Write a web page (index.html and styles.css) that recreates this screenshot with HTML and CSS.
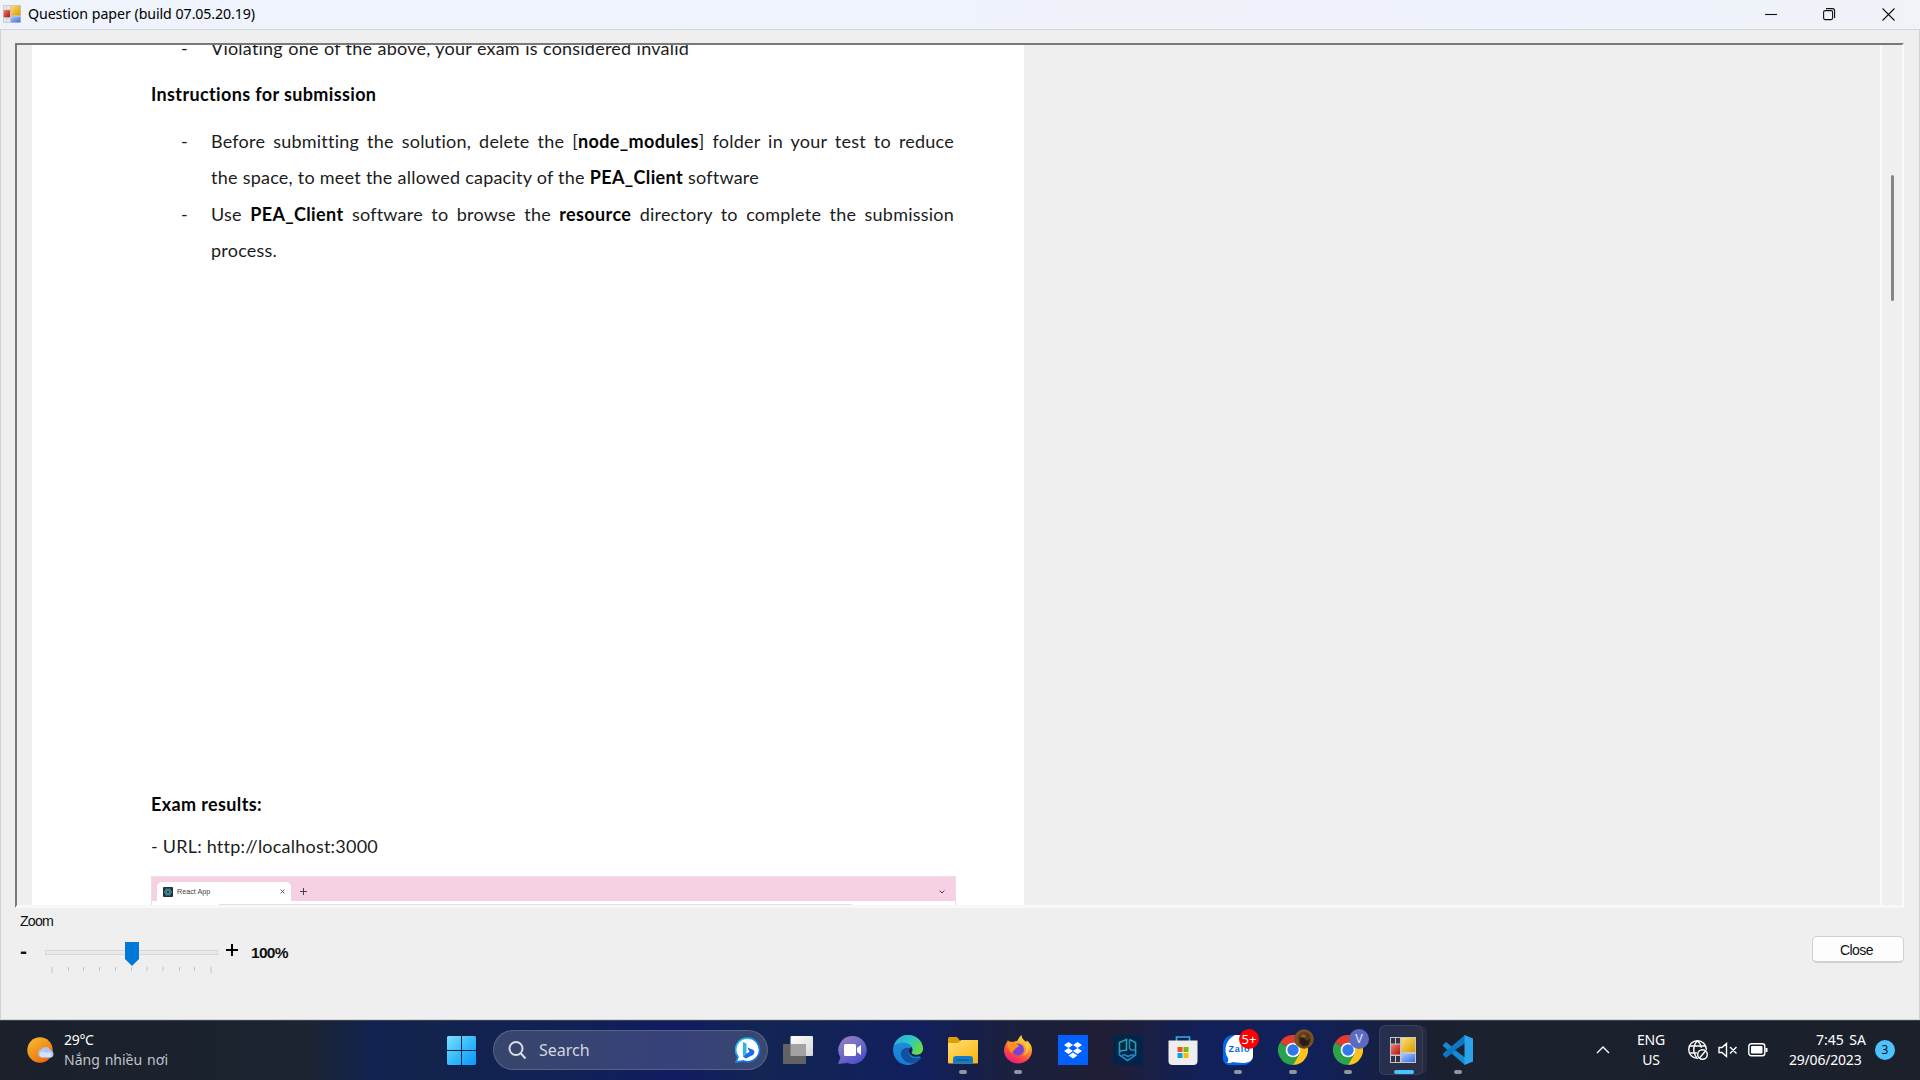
FILE: index.html
```html
<!DOCTYPE html>
<html lang="en">
<head>
<meta charset="utf-8">
<title>Question paper (build 07.05.20.19)</title>
<link rel="stylesheet" href="styles.css">
</head>
<body>
<header class="titlebar">
  <svg class="app-icon" viewBox="0 0 26 26"><use href="#forms"/></svg>
  <h1 class="fit title">Question paper (build 07.05.20.19)</h1>
  <div class="controls">
    <svg viewBox="0 0 13 13"><path d="M0 6.500h12"/></svg>
    <svg viewBox="0 0 13 13"><rect x=".6" y="2.600" width="9" height="9" rx="1.500"/><path d="M3 .6h6.500a2.100 2.100 0 0 1 2.100 2.100V10"/></svg>
    <svg viewBox="0 0 13 13"><path d="M.5.5l12 12M12.500.5l-12 12"/></svg>
  </div>
</header>

<main class="window">
  <section class="viewer">
    <article class="paper">
      <div class="item first"><span class="dash">-</span><p class="fit violating">Violating one of the above, your exam is considered invalid</p></div>
      <h2 class="fit instructions">Instructions for submission</h2>
      <div class="item"><span class="dash">-</span>
        <div><p class="fit full">Before submitting the solution, delete the [<b>node_modules</b>] folder in your test to reduce</p>
        <p class="fit space-line">the space, to meet the allowed capacity of the <b>PEA_Client</b> software</p></div>
      </div>
      <div class="item"><span class="dash">-</span>
        <div><p class="fit full">Use <b>PEA_Client</b> software to browse the <b>resource</b> directory to complete the submission</p>
        <p>process.</p></div>
      </div>
      <h2 class="fit results">Exam results:</h2>
      <p class="fit url">- URL: http://localhost:3000</p>
      <div class="browser">
        <div class="tabs">
          <div class="tab">
            <svg class="react" viewBox="0 0 10 10"><rect width="10" height="10" rx="1" fill="#23303a"/><g fill="none" stroke="#469cae" stroke-width=".8"><ellipse cx="5" cy="5" rx="3.800" ry="1.500"/><ellipse cx="5" cy="5" rx="3.800" ry="1.500" transform="rotate(60 5 5)"/><ellipse cx="5" cy="5" rx="3.800" ry="1.500" transform="rotate(120 5 5)"/></g></svg>
            <span class="tab-name">React App</span>
            <svg class="tab-x" viewBox="0 0 6 6"><path d="M.7.7l4.600 4.600M5.300.7L.7 5.300"/></svg>
          </div>
          <svg class="plus" viewBox="0 0 7 7"><path d="M3.500 0v7M0 3.500h7"/></svg>
          <svg class="chev" viewBox="0 0 6 4"><path d="M.6.6L3 3 5.400.6"/></svg>
        </div>
        <div class="address"></div>
      </div>
    </article>
    <div class="scroll"><div class="thumb"></div></div>
  </section>

  <footer class="bottom">
    <div class="zoom">
      <div class="zoom-label">Zoom</div>
      <div class="zoom-row">
        <b class="minus">-</b>
        <svg class="slider" viewBox="0 0 174 32">
          <rect x=".5" y="8.500" width="172" height="4" fill="#e7eaea" stroke="#d6d6d6"/>
          <path d="M7 25v6M166 25v6M23.500 25v4M38.500 25v4M54.500 25v4M70.500 25v4M86.500 25v4M102 25v4M118 25v4M134.500 25v4M149.500 25v4" stroke="#c3c3c3"/>
          <path d="M80 0h14v17l-7 7-7-7z" fill="#0078d7"/>
        </svg>
        <svg class="zoom-plus" viewBox="0 0 12 12"><path d="M6 0v12M0 6h12"/></svg>
        <b class="percent">100%</b>
      </div>
    </div>
    <button class="close">Close</button>
  </footer>
</main>

<nav class="taskbar">
  <div class="weather">
    <svg viewBox="0 0 28 26"><defs><linearGradient id="sun" x1="0" y1="0" x2=".7" y2="1"><stop stop-color="#f4c22d"/><stop offset="1" stop-color="#ee6a12"/></linearGradient></defs><circle cx="13" cy="13" r="12.700" fill="url(#sun)"/><path d="M14.500 20.800a4.500 4.500 0 0 1-.3-8.600 5.500 5.500 0 0 1 9.300 1 4 4 0 0 1 .5 7.600z" fill="#a9c7f5"/><path d="M14 20a3 3 0 0 1 1-5.400c2-.6 3 1 4.500 1 1 0 2-.7 3.500 0 2 .9 2 3.700.5 4.400z" fill="#d4e3fb"/></svg>
    <div class="weather-text"><div class="temp">29°C</div><div class="fit sky">Nắng nhiều nơi</div></div>
  </div>

  <div class="center">
    <svg class="start" viewBox="0 0 29 29"><defs><linearGradient id="win" gradientUnits="userSpaceOnUse" x1="0" y1="0" x2="29" y2="29"><stop stop-color="#7fe0fd"/><stop offset=".5" stop-color="#35bcfb"/><stop offset="1" stop-color="#0a96fb"/></linearGradient></defs><path d="M1 0h13v14H0V1zM15 0h13l1 1v13H15zM0 15h14v14H1l-1-1zM15 15h14v13l-1 1H15z" fill="url(#win)"/></svg>
    <div class="search">
      <svg class="lens" viewBox="0 0 19 19"><circle cx="8" cy="7.500" r="6.500"/><path d="M12.500 12l5 5.500"/></svg>
      <span>Search</span>
      <svg class="bing" viewBox="0 0 26 26"><defs><linearGradient id="bing" x2="1" y2="1"><stop stop-color="#29dce9"/><stop offset=".5" stop-color="#1684ec"/><stop offset="1" stop-color="#1760dc"/></linearGradient></defs><path d="M13 1.200A11.800 11.800 0 1 1 8.500 24L1 25.200 3 20A11.800 11.800 0 0 1 13 1.200z" fill="#fff" stroke="url(#bing)" stroke-width="1.700"/><path d="M8 5l3.500 1.500v10L8 19.500z" fill="#28b9e9"/><path d="M11.500 16.500l3-1.500-2-4.500 6 2.500c1.500 1.200 1 4-.7 5L11 21.500l-3-2z" fill="#176ae5"/></svg>
    </div>

    <div class="apps">
      <div class="app"><svg viewBox="0 0 30 30"><defs><linearGradient id="tv" x2="1" y2="1"><stop stop-color="#fff"/><stop offset="1" stop-color="#d6d6d8"/></linearGradient></defs><rect x="7.500" y="1" width="22.500" height="20" rx="1" fill="url(#tv)"/><rect x="0" y="9" width="23" height="20" rx="1" fill="#626262"/><path d="M7.500 9H23v12H7.500z" fill="#a3a3a3"/></svg></div>
      <div class="app"><svg viewBox="0 0 30 30"><defs><linearGradient id="chat" x1="0" y1="0" x2=".7" y2="1"><stop stop-color="#a77fba"/><stop offset=".4" stop-color="#7c72c4"/><stop offset="1" stop-color="#4a50c8"/></linearGradient></defs><path d="M14.500 1a14 14 0 1 1-5 27L0 29l2.500-6.500A14 14 0 0 1 14.500 1z" fill="url(#chat)"/><rect x="6" y="9" width="12" height="12" rx="1.500" fill="#fff"/><path d="M19 13l4-3v10l-4-3z" fill="#fff"/></svg></div>
      <div class="app"><svg viewBox="0 0 30 30"><defs><linearGradient id="eg" x2="1" y2=".5"><stop stop-color="#2ba9e8"/><stop offset=".55" stop-color="#2dc7c6"/><stop offset="1" stop-color="#65db49"/></linearGradient><linearGradient id="eb" y2="1" x2="0"><stop stop-color="#2290d8"/><stop offset="1" stop-color="#137ed5"/></linearGradient></defs><path d="M0 15a15 15 0 0 1 30 0l-4 6 2 1.500A15 15 0 0 1 0 15z" fill="url(#eb)"/><path d="M8 18c0 7 7 11 12.500 10.500 3-.8 6-3 7.500-6-4 1-9 1-11.500-2-1.700-2.300-1-5 .5-7-4-2-9 1-9 4.500z" fill="#13509d"/><path d="M1 10C4 3 9.500 0 15 0c9 0 15 6.500 15 13.500 0 4-3 6.500-6.500 6.500-3 0-5-1-5-2 0-1 1-1.500 1-3.500 0-4-4.500-7-9-7-4 0-7.500 1.500-9.500 2.500z" fill="url(#eg)"/><path d="M18.500 12c-3 1-4 6 0 8.500 2.500 1.500 6 1.700 9.500 0l1.500-2.500c-4 2.500-9 2.300-11 0 0-1 1-1.500 1-3.500z" fill="#141f57"/></svg></div>
      <div class="app run"><svg viewBox="0 0 30 30"><defs><linearGradient id="fo" x2=".8" y2="1"><stop stop-color="#ffdf73"/><stop offset="1" stop-color="#fcb713"/></linearGradient></defs><path d="M0 3.500Q0 2 1.500 2H9l3 3.500V14H0z" fill="#df9d06"/><path d="M0 8h10l3-3h17v22.500q0 1-1 1H1q-1 0-1-1z" fill="url(#fo)"/><path d="M5 28.500V24q0-3 3-3h14q3 0 3 3v4.500z" fill="#127cc9"/><path d="M8.500 25h13" stroke="#0a4c89"/></svg></div>
      <div class="app run"><svg viewBox="0 0 30 30"><defs><linearGradient id="ff" x1=".8" y1="0" x2=".3" y2="1"><stop stop-color="#fff44d"/><stop offset=".4" stop-color="#ff982e"/><stop offset=".7" stop-color="#ff4b42"/><stop offset="1" stop-color="#e61587"/></linearGradient></defs><path d="M18.500 0c0 4 3 5 4.500 7l1-1.500C28 9 29 12 29 15c0 8-6.500 13.500-14 13.500S1 22.500 1 15.500c0-4 2-7 3-8.500l1-2 2 3.500C9 7 12 6 14 6c2-3 3-5 4.500-6z" fill="url(#ff)"/><circle cx="15" cy="14.500" r="6" fill="#7944d6"/><path d="M5 7c3-1 5 0 7 1.500 2 1 4 1 4 2-1 2.500-4 2-4 4-2 1-3 2-2 4-5-3-6-7-5-11.500z" fill="#ff8e24"/><path d="M21 9c4 4 2 11-2.500 12 6-1 9-7 6-12z" fill="#ffd03a"/></svg></div>
      <div class="app"><svg viewBox="0 0 30 30"><path d="M0 0h30v30H0z" fill="#0061fe"/><path d="M10.500 7l4.500 3-4.500 3L6 10zM19.500 7l4.500 3-4.500 3-4.500-3zM10.500 13l4.500 3-4.500 3L6 16zM19.500 13l4.500 3-4.500 3-4.500-3zM15 17.500l4.500 3-4.500 3-4.500-3z" fill="#fff"/></svg></div>
      <div class="app"><svg viewBox="0 0 30 30"><path d="M0 0h30v30H0z" fill="#03244a"/><g fill="none" stroke-width="1.600"><path d="M6.500 18V7.500L13.500 4.500v10.500L7 16M16.500 4.500l6 3V18" stroke="#28a5a0"/><path d="M22.500 15H18l-1.500-2V4.500M6.500 16v4l8 5.500 8-5.500v-3M9 20h3l3 1.500 3-1.500h3" stroke="#2089bd"/></g></svg></div>
      <div class="app"><svg viewBox="0 0 30 30"><path d="M8.500 6V2h13v4" fill="none" stroke="#24b3e9" stroke-width="1.700"/><path d="M.5 5.500h29V26q0 4-4 4h-21q-4 0-4-4z" fill="#eee"/><path d="M9.500 12h5v5h-5z" fill="#f25022"/><path d="M15.500 12h5v5h-5z" fill="#7fba00"/><path d="M9.500 18h5v5h-5z" fill="#00a4ef"/><path d="M15.500 18h5v5h-5z" fill="#ffb900"/></svg></div>
      <div class="app run"><svg viewBox="0 0 30 30"><path d="M10 0h14a6 6 0 0 1 6 6v15a9 9 0 0 1-9 9H6a6 6 0 0 1-6-6V10A10 10 0 0 1 10 0z" fill="#0068f5"/><path d="M12 0h12a6 6 0 0 1 6 6v15c0 5-5 7-10 7-5 0-8-1-10-1-2 1-4 1-6 1 2-2 1-3 1-5-4-6-4-17 7-23z" fill="#fff"/><text x="5.500" y="17" class="zalo" textLength="21">Zalo</text></svg><span class="badge">5+</span></div>
      <div class="app run"><svg viewBox="0 0 30 30"><use href="#chrome"/></svg><svg class="avatar" viewBox="0 0 20 20"><circle cx="10" cy="10" r="10" fill="#7b5120"/><path d="M4 8l3-4 5-1 4 3 1 6-3 5-5 2-4-4z" fill="#59391c"/><path d="M6 9l4-1 2 4 4-2-2 6-5 1-3-3z" fill="#281c17"/><path d="M8 5l4 1-1 3-4-1z" fill="#8b602b"/></svg></div>
      <div class="app run"><svg viewBox="0 0 30 30"><use href="#chrome"/></svg><span class="avatar profile">V</span></div>
      <div class="app run active"><svg viewBox="0 0 26 26"><use href="#forms"/></svg></div>
      <div class="app run"><svg viewBox="0 0 30 30"><path d="M0 10l3-3 20 16-1 7L0 11z" fill="#168bd5"/><path d="M0 20l3 3L22.500 7.500 22 0 0 18.500z" fill="#0c77c5"/><path d="M21.500 9L12 15l9.500 7z" fill="#1a2435"/><path d="M21.500 0L30 3.500v23L21.500 30z" fill="#2ba3ec"/></svg></div>
    </div>
  </div>

  <div class="tray">
    <svg class="caret" viewBox="0 0 14 8"><path d="M1 7l6-6 6 6"/></svg>
    <div class="lang"><div>ENG</div><div>US</div></div>
    <svg class="net" viewBox="0 0 20 20"><circle cx="9.500" cy="9.500" r="8.800"/><path d="M1.500 6h16M1.500 13H10M9.500.8c-5 5-5 12.500 0 17.500M9.500.8c2.500 2.500 3.500 4 3.800 7"/><circle cx="14.500" cy="14.500" r="6" class="knock"/><circle cx="14.500" cy="14.500" r="4.800"/><path d="M11.500 18l6-7"/></svg>
    <svg class="mute" viewBox="0 0 20 16"><path d="M1 5.500h3L8.500 1.500v13L4 10.500H1zM12 5l6.500 6.500M18.500 5L12 11.500"/></svg>
    <svg class="battery" viewBox="0 0 20 14"><rect x=".8" y=".8" width="16" height="12" rx="2.500"/><rect x="3" y="3" width="11.500" height="7.500" rx="1" fill="#fff" stroke="none"/><path d="M18.500 5v4" stroke-width="2"/></svg>
    <div class="clock"><div class="fit time">7:45 SA</div><div class="fit date">29/06/2023</div></div>
    <span class="notify">3</span>
  </div>
</nav>

<svg class="defs" width="0" height="0">
  <defs>
    <linearGradient id="gold" x2="1" y2="1"><stop stop-color="#ffdf72"/><stop offset="1" stop-color="#d79a00"/></linearGradient>
    <linearGradient id="red" x2="1" y2="1"><stop stop-color="#f1796f"/><stop offset="1" stop-color="#b01212"/></linearGradient>
    <linearGradient id="blue" x2="1" y2="1"><stop stop-color="#a8c8ff"/><stop offset="1" stop-color="#386cde"/></linearGradient>
    <symbol id="forms" viewBox="0 0 26 26"><path d="M0 0h26v26H0z" fill="#c6c6c8"/><path d="M1 1h4v5.500H1zM6 1h4v5.500H6zM1 19h4v6H1zM6 19h4v6H6z"/><path d="M11.500 1H25v14H11.500z" fill="url(#gold)"/><path d="M1 7.500h9v10H1z" fill="url(#red)"/><path d="M11.500 17H25v8H11.500z" fill="url(#blue)"/></symbol>
    <symbol id="chrome" viewBox="0 0 30 30"><path d="M15 15L2 7.500A15 15 0 0 1 28 7.500H15z" fill="#e33b2e"/><path d="M15 15l6.500 3.700L15 30A15 15 0 0 1 2 7.500z" fill="#2ba24c"/><path d="M15 7.500h13A15 15 0 0 1 15 30l6.500-11.300z" fill="#fcc31e"/><circle cx="15" cy="15" r="7.300" fill="#fff"/><circle cx="15" cy="15" r="5.700" fill="#3079ed"/></symbol>
  </defs>
</svg>
</body>
</html>
```
FILE: styles.css
```css
* { box-sizing: border-box; }
body { margin: 0; width: 1920px; height: 1080px; overflow: hidden; display: flex; flex-direction: column; background: #efefef; font-family: "Open Sans", sans-serif; }
h1, h2, p { margin: 0; font-size: inherit; font-weight: normal; }
svg { display: block; flex: none; }
.defs { position: absolute; }
.fit { text-align: justify; text-align-last: justify; white-space: nowrap; }

.titlebar { height: 30px; flex: none; display: flex; align-items: center; padding: 0 25px 1px 3px; background: linear-gradient(90deg, #eff3fc 50%, #f0f2f9 58%, #eef2fc 80%, #f0f3f8); border-bottom: 1px solid #d2d4d8; }
.app-icon { width: 18px; height: 18px; fill: #e8e8ea; }
.title { width: 227px; margin-left: 7px; font: 14.2px/28px "Noto Sans", sans-serif; letter-spacing: -0.1px; color: #000; }
.controls { display: flex; gap: 46px; margin-left: auto; }
.controls svg { width: 13px; height: 13px; fill: none; stroke: #111; stroke-width: 1.1; }
.controls svg:first-child { margin-right: -1px; }

.window { flex: 1; min-height: 0; display: flex; flex-direction: column; padding: 13px 15px 0 14px; border: 1px solid #d3d3d3; border-top: 0; }
.viewer { height: 865px; flex: none; display: flex; justify-content: space-between; overflow: hidden; border-style: solid; border-width: 2px 2px 3px 2px; border-color: #777a78 #fbfbfb #f8f8f8 #777a78; }
.paper { width: 992px; margin-left: 15px; background: #fff; padding-left: 119px; color: #1c1c1c; font: 18px/36.6px Lato, sans-serif; letter-spacing: 0.22px; font-variant-ligatures: none; overflow: hidden; height: 860px; }
.paper b, .paper h2 { font-weight: 700; color: #050505; letter-spacing: 0.36px; }
.item { display: flex; padding-left: 30px; }
.first { height: 32px; margin-top: -15px; }
.dash { width: 30px; flex: none; }
.violating { width: 478px; }
.instructions { width: 225px; margin: 14px 0 10px; }
.full { width: 743px; }
.space-line { width: 548px; }
.results { width: 111px; margin-top: 517px; }
.url { width: 227px; margin-top: 5px; }
.browser { width: 805px; margin-top: 12px; border: 1px solid #e7dfe5; border-bottom: 0; letter-spacing: 0; }
.tabs { height: 25px; display: flex; align-items: flex-end; background: #f5d1e3; border-bottom: 1px solid #fff; }
.tab { width: 134px; height: 19px; margin-left: 5px; padding: 0 6px; display: flex; align-items: center; background: #fff; border-radius: 5px 5px 0 0; }
.react { width: 10px; height: 10px; }
.tab-name { margin: 0 auto 0 4px; font: 7.2px/12px "Liberation Sans", sans-serif; color: #444; white-space: nowrap; }
.tab-x, .plus, .chev { fill: none; stroke: #444; }
.tab-x { width: 5px; height: 5px; }
.plus { width: 7px; height: 7px; margin: 0 0 6px 9px; }
.chev { width: 6px; height: 4px; margin: 0 10px 7px auto; }
.address { width: 639px; height: 10px; margin: 2px 0 0 64px; background: #e0e2e5; border-radius: 5px; }
.scroll { width: 23px; border-left: 2px solid #fafafa; border-right: 1px solid #e9e9e9; padding: 130px 0 0 9px; margin-right: -1px; }
.thumb { width: 3px; height: 126px; border-radius: 2px; background: #858585; }

.bottom { flex: 1; display: flex; justify-content: space-between; font-family: "Liberation Sans", sans-serif; color: #111; }
.zoom { padding: 4px 0 0 5px; }
.zoom-label { font-size: 14.2px; line-height: 18px; letter-spacing: -0.8px; }
.zoom-row { display: flex; align-items: flex-start; margin-top: 12px; }
.minus { width: 25px; font-size: 21px; line-height: 17px; }
.slider { width: 174px; height: 32px; }
.zoom-plus { width: 12px; height: 12px; margin: 2px 0 0 7px; fill: none; stroke: #000; stroke-width: 2; }
.percent { margin-left: 13px; font-size: 15.5px; line-height: 21px; letter-spacing: -0.7px; }
.close { width: 92px; height: 27px; margin: 28px 0 0; padding: 1px 3px 0 0; border: 1px solid #d0d0d0; border-width: 1px 1px 2px; border-radius: 5px; background: #fdfdfd; font: 14px "Liberation Sans", sans-serif; letter-spacing: -0.6px; color: #111; }

.taskbar { height: 60px; flex: none; display: grid; grid-template-columns: 447px 1fr auto; align-items: center; padding-bottom: 1px; color: #fff; border-top: 1px solid #3c424e; background: linear-gradient(90deg, #1b202b 0, #1b2431 310px, #10224f 370px, #12234d 430px, #112155 560px, #111c61 680px, #122553 760px, #111f5d 920px, #1a203d 1010px, #201e36 1110px, #112058 1200px, #10205a 1310px, #1b2030 1440px, #1b222d 1510px, #1b202b 1920px); }
.weather { display: flex; align-items: center; padding-left: 27px; gap: 9px; font: 14px/20px "Noto Sans", sans-serif; }
.weather svg { width: 28px; height: 26px; }
.weather-text { margin-top: 0; }
.temp { letter-spacing: -0.3px; }
.sky { width: 104px; color: #c2c5ca; }
.center { display: flex; align-items: center; }
.start { width: 29px; height: 29px; }
.search { width: 275px; height: 40px; margin-left: 17px; padding: 0 6px 0 14px; display: flex; align-items: center; background: rgba(255,255,255,.16); border: 1px solid rgba(255,255,255,.16); border-radius: 20px; color: #d4d7e1; font: 16px/38px "Noto Sans", sans-serif; }
.lens { width: 19px; height: 19px; margin-right: 12px; fill: none; stroke: #d9dce5; stroke-width: 2; }
.bing { width: 26px; height: 26px; margin-left: auto; }
.apps { display: flex; margin-left: 2px; }
.app { width: 55px; height: 50px; display: flex; align-items: center; justify-content: center; position: relative; }
.app > svg:first-child { width: 30px; height: 30px; }
.run::after { content: ""; position: absolute; bottom: 1px; left: 24px; width: 8px; height: 4px; border-radius: 2px; background: #9295a0; }
.app.active { width: 44px; margin: 0 7px 0 4px; background: rgba(255,255,255,.07); border: 1px solid rgba(255,255,255,.08); border-radius: 6px; box-shadow: 5px 0 0 -1px rgba(255,255,255,.05); }
.app.active > svg:first-child { width: 26px; height: 26px; margin-left: 4px; fill: #303444; }
.active::after { left: 14px; bottom: 0; width: 20px; background: #4cc2ff; }
.badge, .avatar { position: absolute; left: 29px; top: 4px; width: 20px; height: 20px; border-radius: 50%; text-align: center; }
.badge { background: #f00; font: 13px/20px "Noto Sans", sans-serif; }
.profile { background: #5c6bc0; color: #dfe2f5; font: 12.5px/20px Roboto, sans-serif; }
.zalo { font: bold 9px "Liberation Sans", sans-serif; fill: #0868df; }

.tray { display: flex; align-items: center; padding-right: 25px; font: 14px/20px "Noto Sans", sans-serif; }
.tray svg { fill: none; stroke: #fff; stroke-width: 1.4; }
.caret { width: 14px; height: 8px; }
.lang { width: 30px; margin: 0 0 0 26px; text-align: center; letter-spacing: -0.2px; }
.net { width: 20px; height: 20px; margin-left: 22px; }
.tray .knock { fill: #1b202b; stroke: none; }
.mute { width: 20px; height: 16px; margin-left: 10px; }
.battery { width: 20px; height: 14px; margin-left: 10px; }
.clock { width: 77px; margin: -1px 0 0 21px; }
.time { width: 50px; margin-left: auto; }
.date { letter-spacing: -0.2px; }
.notify { width: 20px; height: 20px; margin-left: 9px; border-radius: 50%; background: #4cc2ff; color: #111; text-align: center; font-size: 12px; }
```
